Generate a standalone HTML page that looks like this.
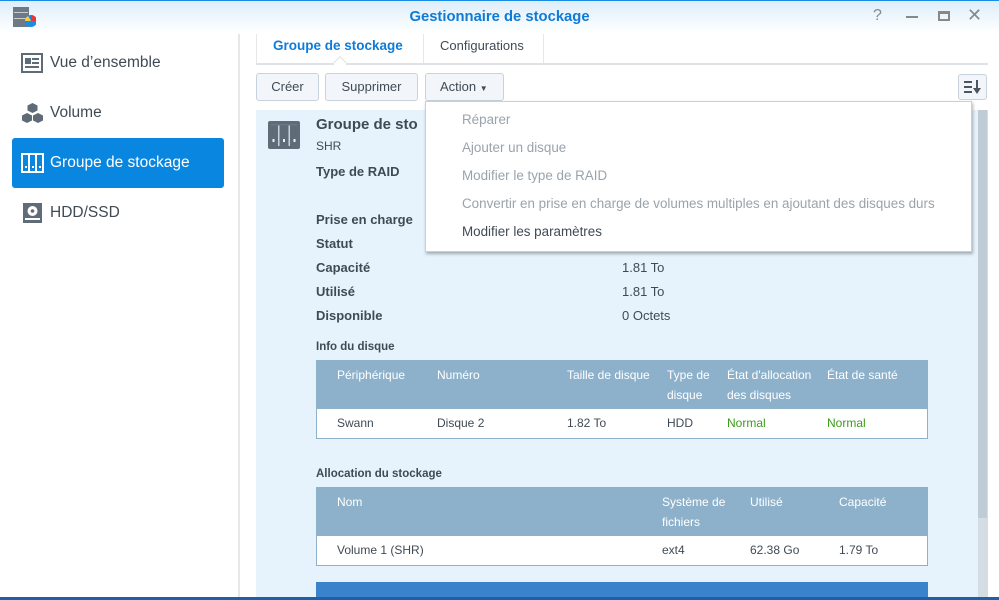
<!DOCTYPE html>
<html><head><meta charset="utf-8"><style>
*{margin:0;padding:0;box-sizing:border-box}
body{width:999px;height:600px;overflow:hidden;background:#fff;font-family:"Liberation Sans",sans-serif;font-size:13px;color:#404a54;position:relative}
.a{position:absolute;white-space:nowrap}
.b{font-weight:bold}
</style></head><body>
<div class="a" style="left:0;top:0;width:999px;height:33px;background:linear-gradient(#ddeefb,#fff);border-top:1px solid #1a8be6"></div>
<svg class="a" style="left:12px;top:6px" width="24" height="22"><rect x="1" y="1" width="16" height="20" fill="#6c7a88"/><rect x="2" y="6" width="14" height="1" fill="#ccc"/><rect x="2" y="12" width="14" height="1" fill="#ccc"/><circle cx="19" cy="15" r="6" fill="#1a8be6"/><path d="M19 15L19 9A6 6 0 0 1 25 15Z" fill="#e33"/><path d="M19 15L13 15A6 6 0 0 1 16 10Z" fill="#fc3"/></svg>
<div class="a b" style="left:0;width:999px;top:9px;text-align:center;color:#0f7bd6;font-size:14.8px">Gestionnaire de stockage</div>
<div class="a" style="left:873px;top:7px;color:#888;font-size:16px">?</div>
<div class="a" style="left:906px;top:16px;width:12px;height:2px;background:#888"></div>
<div class="a" style="left:938px;top:11px;width:12px;height:10px;border:2px solid #888;border-top-width:3px"></div>
<div class="a" style="left:967px;top:5px;color:#888;font-size:18px">✕</div>
<div class="a" style="left:238px;top:34px;width:2px;height:566px;background:#e4e8eb"></div>
<svg class="a" style="left:21px;top:53px" width="22" height="20"><rect x="1" y="1" width="20" height="18" fill="none" stroke="#5f6b76" stroke-width="2"/><rect x="4" y="5" width="6" height="6" fill="#5f6b76"/><rect x="11" y="5" width="7" height="2" fill="#5f6b76"/><rect x="11" y="9" width="7" height="2" fill="#5f6b76"/><rect x="4" y="13" width="14" height="2" fill="#5f6b76"/></svg>
<div class="a" style="left:50px;top:54px;font-size:15.5px">Vue d’ensemble</div>
<svg class="a" style="left:21px;top:102px" width="23" height="23"><path d="M11.5 1l5 2.5v5l-5 2.5-5-2.5v-5z M6 11l5 2.5v5L6 21l-5-2.5v-5z M17 11l5 2.5v5L17 21l-5-2.5v-5z" fill="#5f6b76"/></svg>
<div class="a" style="left:50px;top:104px;font-size:15.5px">Volume</div>
<div class="a" style="left:12px;top:138px;width:212px;height:50px;background:#0886e0;border-radius:3px"></div>
<svg class="a" style="left:21px;top:153px" width="23" height="20"><rect x="1" y="1" width="21" height="18" fill="none" stroke="#fff" stroke-width="2"/><rect x="7" y="2" width="2" height="16" fill="#fff"/><rect x="14" y="2" width="2" height="16" fill="#fff"/><rect x="4" y="13" width="2" height="2" fill="#fff"/><rect x="11" y="13" width="2" height="2" fill="#fff"/><rect x="18" y="13" width="2" height="2" fill="#fff"/></svg>
<div class="a" style="left:50px;top:154px;font-size:15.5px;color:#fff">Groupe de stockage</div>
<svg class="a" style="left:22px;top:202px" width="21" height="22"><rect x="1" y="1" width="19" height="20" fill="#5f6b76"/><circle cx="10.5" cy="9" r="5" fill="#fff"/><circle cx="10.5" cy="9" r="1.8" fill="#5f6b76"/><rect x="3" y="16" width="15" height="2" fill="#fff"/></svg>
<div class="a" style="left:50px;top:204px;font-size:15.5px">HDD/SSD</div>
<div class="a" style="left:256px;top:34px;width:1px;height:30px;background:#e4e8eb"></div>
<div class="a" style="left:423px;top:34px;width:1px;height:30px;background:#e4e8eb"></div>
<div class="a" style="left:543px;top:34px;width:1px;height:30px;background:#e4e8eb"></div>
<div class="a" style="left:256px;top:63px;width:732px;height:2px;background:#dfe3e6"></div>
<div class="a" style="left:335px;top:58px;width:10px;height:10px;background:#fff;border-left:1px solid #dfe3e6;border-top:1px solid #dfe3e6;transform:rotate(45deg)"></div>
<div class="a b" style="left:273px;top:38px;color:#0f7bd6;font-size:13.5px">Groupe de stockage</div>
<div class="a" style="left:440px;top:38px;font-size:13px">Configurations</div>
<div class="a" style="left:256px;top:73px;width:63px;height:28px;background:#f2f6fa;border:1px solid #c7d2dc;border-radius:3px;text-align:center;line-height:26px">Créer</div>
<div class="a" style="left:325px;top:73px;width:93px;height:28px;background:#f2f6fa;border:1px solid #c7d2dc;border-radius:3px;text-align:center;line-height:26px">Supprimer</div>
<div class="a" style="left:425px;top:73px;width:79px;height:28px;background:#f2f6fa;border:1px solid #c7d2dc;border-radius:3px;line-height:26px;padding-left:14px">Action <span style="font-size:8px">▼</span></div>
<div class="a" style="left:958px;top:74px;width:29px;height:26px;background:#f2f6fa;border:1px solid #c7d2dc;border-radius:3px"></div>
<svg class="a" style="left:964px;top:80px" width="18" height="15"><rect x="0" y="1" width="8" height="2" fill="#4b5660"/><rect x="0" y="6" width="8" height="2" fill="#4b5660"/><rect x="0" y="11" width="8" height="2" fill="#4b5660"/><rect x="12" y="0" width="2" height="9" fill="#4b5660"/><path d="M9 8h8l-4 6z" fill="#4b5660"/></svg>
<div class="a" style="left:256px;top:110px;width:722px;height:490px;background:#e6f3fd"></div>
<div class="a" style="left:978px;top:110px;width:10px;height:490px;background:#d4dde4"></div>
<div class="a" style="left:978px;top:110px;width:9px;height:408px;background:#bfcbd5"></div>
<svg class="a" style="left:268px;top:121px" width="32" height="28"><rect x="0" y="0" width="32" height="28" rx="2" fill="#5f6b76"/><rect x="10" y="3" width="1.5" height="22" fill="#c8d3dc"/><rect x="20.5" y="3" width="1.5" height="22" fill="#c8d3dc"/><rect x="3" y="3" width="26" height="1.5" fill="#6a7682"/><rect x="4.5" y="18" width="2" height="3" fill="#e6f3fd"/><rect x="15" y="18" width="2" height="3" fill="#e6f3fd"/><rect x="25.5" y="18" width="2" height="3" fill="#e6f3fd"/></svg>
<div class="a b" style="left:316px;top:116px;font-size:15px">Groupe de sto</div>
<div class="a" style="left:316px;top:139px;font-size:12px">SHR</div>
<div class="a b" style="left:316px;top:164px">Type de RAID</div>
<div class="a b" style="left:316px;top:212px">Prise en charge</div>
<div class="a b" style="left:316px;top:236px">Statut</div>
<div class="a b" style="left:316px;top:260px">Capacité</div>
<div class="a b" style="left:316px;top:284px">Utilisé</div>
<div class="a b" style="left:316px;top:308px">Disponible</div>
<div class="a" style="left:622px;top:260px">1.81 To</div>
<div class="a" style="left:622px;top:284px">1.81 To</div>
<div class="a" style="left:622px;top:308px">0 Octets</div>
<div class="a b" style="left:316px;top:341px;font-size:11.5px">Info du disque</div>
<div class="a" style="left:316px;top:360px;width:612px;height:79px;background:#fff;border:1px solid #8eb1cb"></div>
<div class="a" style="left:316px;top:360px;width:612px;height:49px;background:#8eb1cb"></div>
<div style="position:absolute;left:0;top:0;font-size:12px;color:#fff;line-height:20px">
<div class="a" style="left:337px;top:365px">Périphérique</div>
<div class="a" style="left:437px;top:365px">Numéro</div>
<div class="a" style="left:567px;top:365px">Taille de disque</div>
<div class="a" style="left:667px;top:365px">Type de<br>disque</div>
<div class="a" style="left:727px;top:365px">État d'allocation<br>des disques</div>
<div class="a" style="left:827px;top:365px">État de santé</div>
</div>
<div style="position:absolute;left:0;top:0;font-size:12px">
<div class="a" style="left:337px;top:416px">Swann</div>
<div class="a" style="left:437px;top:416px">Disque 2</div>
<div class="a" style="left:567px;top:416px">1.82 To</div>
<div class="a" style="left:667px;top:416px">HDD</div>
<div class="a" style="left:727px;top:416px;color:#3b9d1a">Normal</div>
<div class="a" style="left:827px;top:416px;color:#3b9d1a">Normal</div>
</div>
<div class="a b" style="left:316px;top:468px;font-size:11.5px">Allocation du stockage</div>
<div class="a" style="left:316px;top:487px;width:612px;height:79px;background:#fff;border:1px solid #8eb1cb"></div>
<div class="a" style="left:316px;top:487px;width:612px;height:49px;background:#8eb1cb"></div>
<div style="position:absolute;left:0;top:0;font-size:12px;color:#fff;line-height:20px">
<div class="a" style="left:337px;top:492px">Nom</div>
<div class="a" style="left:662px;top:492px">Système de<br>fichiers</div>
<div class="a" style="left:750px;top:492px">Utilisé</div>
<div class="a" style="left:839px;top:492px">Capacité</div>
</div>
<div style="position:absolute;left:0;top:0;font-size:12px">
<div class="a" style="left:337px;top:543px">Volume 1 (SHR)</div>
<div class="a" style="left:662px;top:543px">ext4</div>
<div class="a" style="left:750px;top:543px">62.38 Go</div>
<div class="a" style="left:839px;top:543px">1.79 To</div>
</div>
<div class="a" style="left:316px;top:582px;width:612px;height:18px;background:#3b82cc"></div>
<div class="a" style="left:0;top:597px;width:999px;height:3px;background:#1e5fa6"></div>
<div class="a" style="left:425px;top:101px;width:547px;height:151px;background:#fff;border:1px solid #c9cfd4;box-shadow:1px 2px 3px rgba(0,0,0,.3)"></div>
<div style="position:absolute;left:0;top:0;color:#9aa3ab;font-size:13.4px">
<div class="a" style="left:462px;top:112px">Réparer</div>
<div class="a" style="left:462px;top:140px">Ajouter un disque</div>
<div class="a" style="left:462px;top:168px">Modifier le type de RAID</div>
<div class="a" style="left:462px;top:196px">Convertir en prise en charge de volumes multiples en ajoutant des disques durs</div>
<div class="a" style="left:462px;top:224px;color:#404a54">Modifier les paramètres</div>
</div>
</body></html>
